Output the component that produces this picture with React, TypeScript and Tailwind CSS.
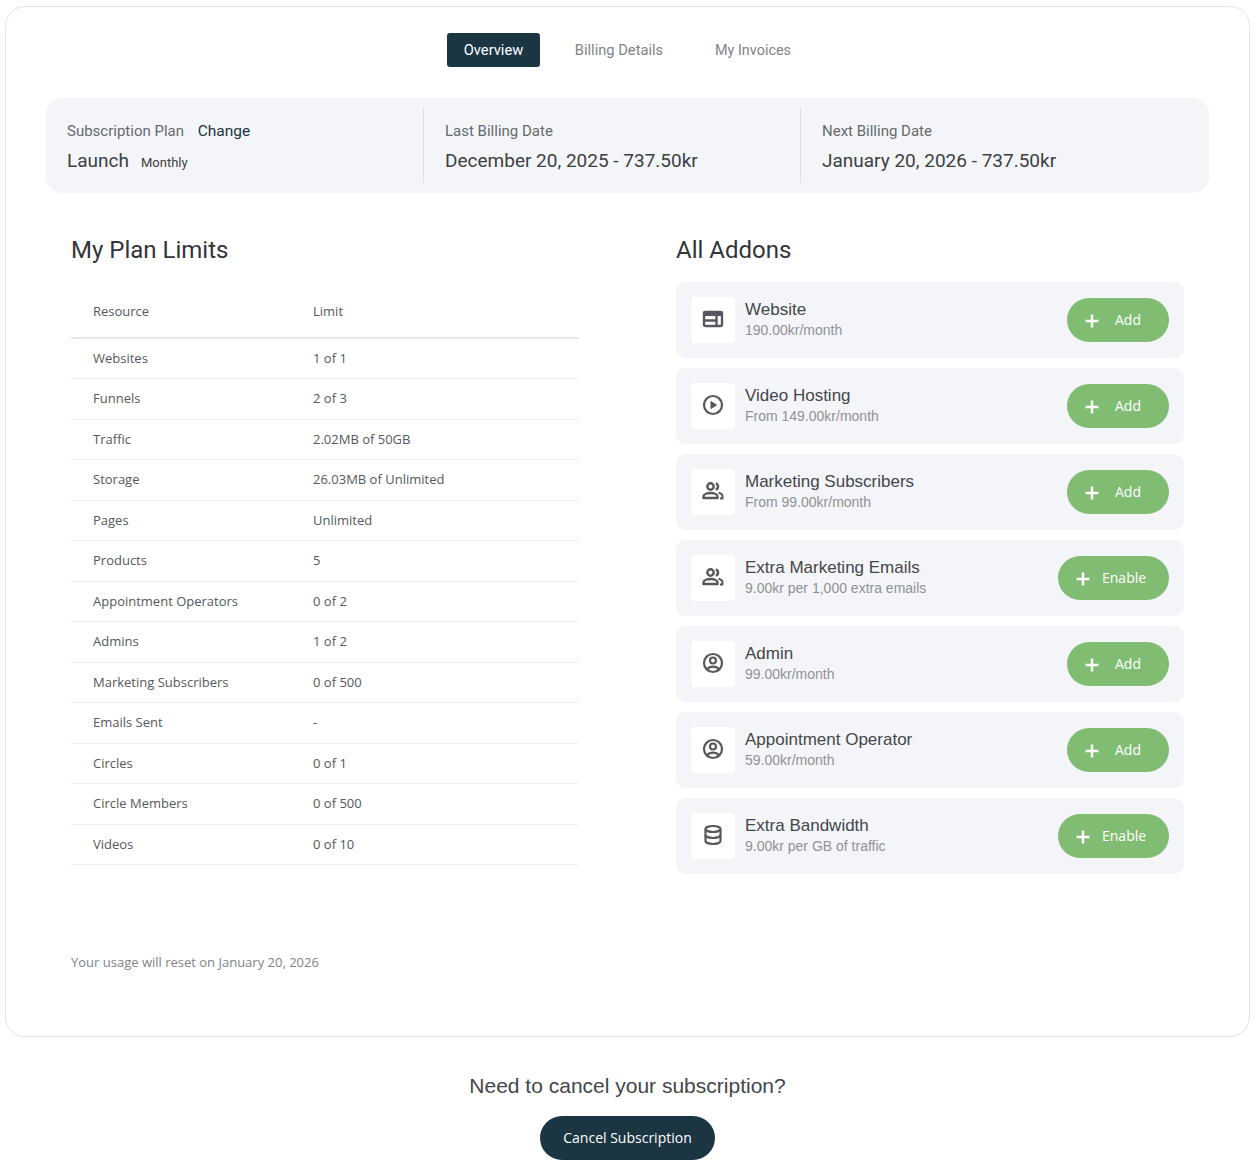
import React from "react";

const rows: [string, string][] = [
  ["Websites", "1 of 1"],
  ["Funnels", "2 of 3"],
  ["Traffic", "2.02MB of 50GB"],
  ["Storage", "26.03MB of Unlimited"],
  ["Pages", "Unlimited"],
  ["Products", "5"],
  ["Appointment Operators", "0 of 2"],
  ["Admins", "1 of 2"],
  ["Marketing Subscribers", "0 of 500"],
  ["Emails Sent", "-"],
  ["Circles", "0 of 1"],
  ["Circle Members", "0 of 500"],
  ["Videos", "0 of 10"],
];

function Ico({ children, w = "2.2" }: { children: React.ReactNode; w?: string }) {
  return (
    <svg width="24" height="24" viewBox="0 0 24 24" fill="none" stroke="#55585c" strokeWidth={w} strokeLinecap="butt" strokeLinejoin="round">
      {children}
    </svg>
  );
}
const WebIcon = () => (
  <Ico w="2.4">
    <rect x="3" y="5" width="18" height="14" rx="1.5" />
    <path d="M2.500 4.500h19v4.500h-19z" fill="#55585c" stroke="none" />
    <path d="M3 13.500h12.500M15.500 7v12" />
  </Ico>
);
const PlayIcon = () => (
  <Ico>
    <circle cx="12" cy="12" r="9" />
    <path d="M10 8.500l5.500 3.500-5.500 3.500z" fill="#55585c" strokeWidth="1" />
  </Ico>
);
const PeopleIcon = () => (
  <Ico w="2.4">
    <circle cx="9.500" cy="7.500" r="3.200" />
    <path d="M2.500 19v-1.500c0-2.100 3.200-3.500 7-3.500s7 1.400 7 3.500V19z" />
    <path d="M14.800 4.300a3.400 3.400 0 0 1 0 6.400" strokeWidth="2.400" />
    <path d="M17.500 13.800c2.400.6 4 1.900 4 3.700V19.500h-2.500" strokeWidth="2" />
  </Ico>
);
const UserIcon = () => (
  <Ico>
    <circle cx="12" cy="12" r="9" />
    <circle cx="12" cy="9.500" r="3" />
    <path d="M6 18.500c1.500-1.900 3.700-2.800 6-2.800s4.500.9 6 2.800" />
  </Ico>
);
const DbIcon = () => (
  <Ico>
    <ellipse cx="12" cy="6" rx="7.500" ry="3" />
    <path d="M4.500 6v12c0 1.700 3.400 3 7.500 3s7.500-1.300 7.500-3V6" />
    <path d="M4.500 12c0 1.700 3.400 3 7.500 3s7.500-1.300 7.500-3" />
  </Ico>
);

const addons: { t: string; s: string; i: React.ReactNode; b: string }[] = [
  { t: "Website", s: "190.00kr/month", i: <WebIcon />, b: "Add" },
  { t: "Video Hosting", s: "From 149.00kr/month", i: <PlayIcon />, b: "Add" },
  { t: "Marketing Subscribers", s: "From 99.00kr/month", i: <PeopleIcon />, b: "Add" },
  { t: "Extra Marketing Emails", s: "9.00kr per 1,000 extra emails", i: <PeopleIcon />, b: "Enable" },
  { t: "Admin", s: "99.00kr/month", i: <UserIcon />, b: "Add" },
  { t: "Appointment Operator", s: "59.00kr/month", i: <UserIcon />, b: "Add" },
  { t: "Extra Bandwidth", s: "9.00kr per GB of traffic", i: <DbIcon />, b: "Enable" },
];

const roboto = "font-['Roboto',sans-serif]";
const openSans = "font-['Open_Sans',sans-serif]";
const helv = "font-['Liberation_Sans',sans-serif]";

function Plus() {
  return (
    <svg width="14" height="14" viewBox="0 0 14 14" className="mt-[2px]">
      <path d="M7 0.500v13M0.500 7h13" stroke="#fff" strokeWidth="2.500" />
    </svg>
  );
}

export default function App() {
  return (
    <div className="w-[1256px] h-[1166px] bg-white overflow-hidden pt-[6px] pl-[5px]">
      <div className="w-[1245px] h-[1031px] rounded-[20px] border border-[#e2e3f0] bg-white px-[40px] pt-[26px]">
        <div className="flex justify-center h-[34px] text-[14.7px] font-['Roboto',sans-serif]">
          <div className="w-[93px] h-[34px] rounded-[3px] bg-[#1b3542] text-white flex items-center justify-center">Overview</div>
          <div className="w-[158px] flex items-center justify-center text-[#818389]">Billing Details</div>
          <div className="w-[110px] pt-[2px] flex items-center justify-center text-[#818389] text-[14.4px]">My Invoices</div>
        </div>

        <div className={`mt-[31px] h-[95px] w-[1163px] rounded-[16px] bg-[#f4f5f9] flex py-[10px] ${roboto}`}>
          <div className="w-[378px] border-r border-[#dfe0e4] pl-[21px] pt-[13px]">
            <div className="text-[15px] leading-[20px] text-[#666a6e]">
              Subscription Plan <a className="ml-[10px] text-[15.5px] text-[#1b3542]">Change</a>
            </div>
            <div className="mt-[8px] flex items-baseline leading-[24px] text-[#3d4043]">
              <span className="text-[19px]">Launch</span>
              <span className="ml-[12px] text-[13px] text-[#3d4043]">Monthly</span>
            </div>
          </div>
          <div className="w-[377px] border-r border-[#dfe0e4] pl-[21px] pt-[13px]">
            <div className="text-[15px] leading-[20px] text-[#666a6e]">Last Billing Date</div>
            <div className="mt-[8px] text-[19px] leading-[24px] text-[#3d4043]">December 20, 2025 - 737.50kr</div>
          </div>
          <div className="pl-[21px] pt-[13px]">
            <div className="text-[15px] leading-[20px] text-[#666a6e]">Next Billing Date</div>
            <div className="mt-[8px] text-[19px] leading-[24px] text-[#3d4043]">January 20, 2026 - 737.50kr</div>
          </div>
        </div>

        <div className="flex mt-[41px] pl-[25px]">
          <div className="w-[509px]">
            <h2 className={`text-[24px] leading-[32px] text-[#333538] ${roboto}`}>My Plan Limits</h2>
            <table className={`mt-[16px] w-[508px] text-[13px] text-[#55585c] ${openSans} border-collapse`}>
              <thead>
                <tr className="h-[56px] border-b-2 border-[#e8e8ee]">
                  <th className="w-[242px] pl-[22px] pt-[4px] text-left font-normal">Resource</th>
                  <th className="pt-[4px] text-left font-normal">Limit</th>
                </tr>
              </thead>
              <tbody>
                {rows.map((r) => (
                  <tr key={r[0]} className="h-[40.5px] border-b border-[#eeeff3]">
                    <td className="pl-[22px]">{r[0]}</td>
                    <td>{r[1]}</td>
                  </tr>
                ))}
              </tbody>
            </table>
            <p className={`mt-[88px] text-[13px] leading-[18px] text-[#808388] ${openSans}`}>Your usage will reset on January 20, 2026</p>
          </div>
          <div className="ml-[96px] w-[508px]">
            <h2 className={`text-[24px] leading-[32px] text-[#333538] ${roboto}`}>All Addons</h2>
            <div className="mt-[16px] flex flex-col gap-[10px]">
              {addons.map((a) => (
                <div key={a.t} className="h-[76px] rounded-[10px] bg-[#f4f5f9] flex items-center pl-[15px] pr-[15px]">
                  <div className="w-[44px] h-[46px] pb-[2px] rounded-[4px] bg-white flex items-center justify-center">{a.i}</div>
                  <div className={`ml-[10px] flex-1 ${helv}`}>
                    <div className="text-[17px] leading-[20px] text-[#44474a]">{a.t}</div>
                    <div className="text-[14px] leading-[20px] text-[#909295]">{a.s}</div>
                  </div>
                  <button className={`h-[44px] rounded-full bg-[#81bc73] text-white text-[14px] font-medium flex items-center ${openSans} ${a.b === "Add" ? "w-[102px] pl-[18px]" : "w-[111px] pl-[18px]"}`}>
                    <Plus />
                    <span className={`pb-[2px] ${a.b === "Add" ? "ml-[16px]" : "ml-[12px]"}`}>{a.b}</span>
                  </button>
                </div>
              ))}
            </div>
          </div>
        </div>
      </div>

      <div className="w-[1245px] flex flex-col items-center">
        <p className={`mt-[35px] text-[21px] leading-[28px] text-[#444649] ${helv}`}>Need to cancel your subscription?</p>
        <button className={`mt-[16px] w-[175px] h-[44px] pb-[2px] rounded-full bg-[#1b3542] text-white text-[14px] font-medium ${openSans}`}>Cancel Subscription</button>
      </div>
    </div>
  );
}
